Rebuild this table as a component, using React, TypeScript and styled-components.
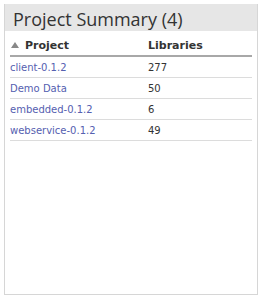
import styled, { createGlobalStyle } from 'styled-components'

const GlobalStyle = createGlobalStyle`
    body {
        margin: 0;
        background: #fff;
        font-family: "DejaVu Sans", Verdana, sans-serif;
    }
`

type project = {
    name: string
    libraries: number
}

const projects: project[] = [
    {name: 'client-0.1.2', libraries: 277},
    {name: 'Demo Data', libraries: 50},
    {name: 'embedded-0.1.2', libraries: 6},
    {name: 'webservice-0.1.2', libraries: 49},
]

const Panel = styled.section`
    margin: 4px 0 0 4px;
    width: 254px;
    height: 291px;
    box-sizing: border-box;
    border: 1px solid #d6d6d6;
    border-top: none;
    background: #fff;
`

const Title = styled.h2`
    margin: 0;
    height: 27px;
    padding: 0 0 0 8px;
    background: #e6e6e6;
    font-family: "Open Sans", sans-serif;
    font-weight: 400;
    font-size: 18px;
    line-height: 30px;
    color: #333;
`

const Body = styled.div`
    padding: 5px 5px 0 5px;
`

const Table = styled.table`
    width: 100%;
    border-collapse: collapse;
    font-size: 10px;
`

const HeadCell = styled.th<{ $width?: string }>`
    text-align: left;
    font-weight: bold;
    font-size: 11px;
    line-height: 13px;
    color: #333;
    padding: 3px 0 3px 0;
    border-bottom: 2px solid #a8a8a8;
    width: ${p => p.$width || 'auto'};
`

const SortArrow = styled.span`
    display: inline-block;
    width: 0;
    height: 0;
    margin: 0 6px 1px 1px;
    border-left: 4px solid transparent;
    border-right: 4px solid transparent;
    border-bottom: 6px solid #888;
`

const Cell = styled.td`
    padding: 0;
    height: 20px;
    border-bottom: 1px solid #dcdcdc;
    color: #333;
`

const ProjectLink = styled.a`
    color: #5560b0;
    text-decoration: none;
`

function ProjectSummary() {
    return (
        <Panel>
            <Title>Project Summary ({projects.length})</Title>
            <Body>
                <Table>
                    <thead>
                        <tr>
                            <HeadCell $width="138px"><SortArrow />Project</HeadCell>
                            <HeadCell>Libraries</HeadCell>
                        </tr>
                    </thead>
                    <tbody>
                        {projects.map(p => (
                            <tr key={p.name}>
                                <Cell><ProjectLink href="#">{p.name}</ProjectLink></Cell>
                                <Cell>{p.libraries}</Cell>
                            </tr>
                        ))}
                    </tbody>
                </Table>
            </Body>
        </Panel>
    )
}

export default function App() {
    return (
        <>
            <GlobalStyle />
            <ProjectSummary />
        </>
    )
}
